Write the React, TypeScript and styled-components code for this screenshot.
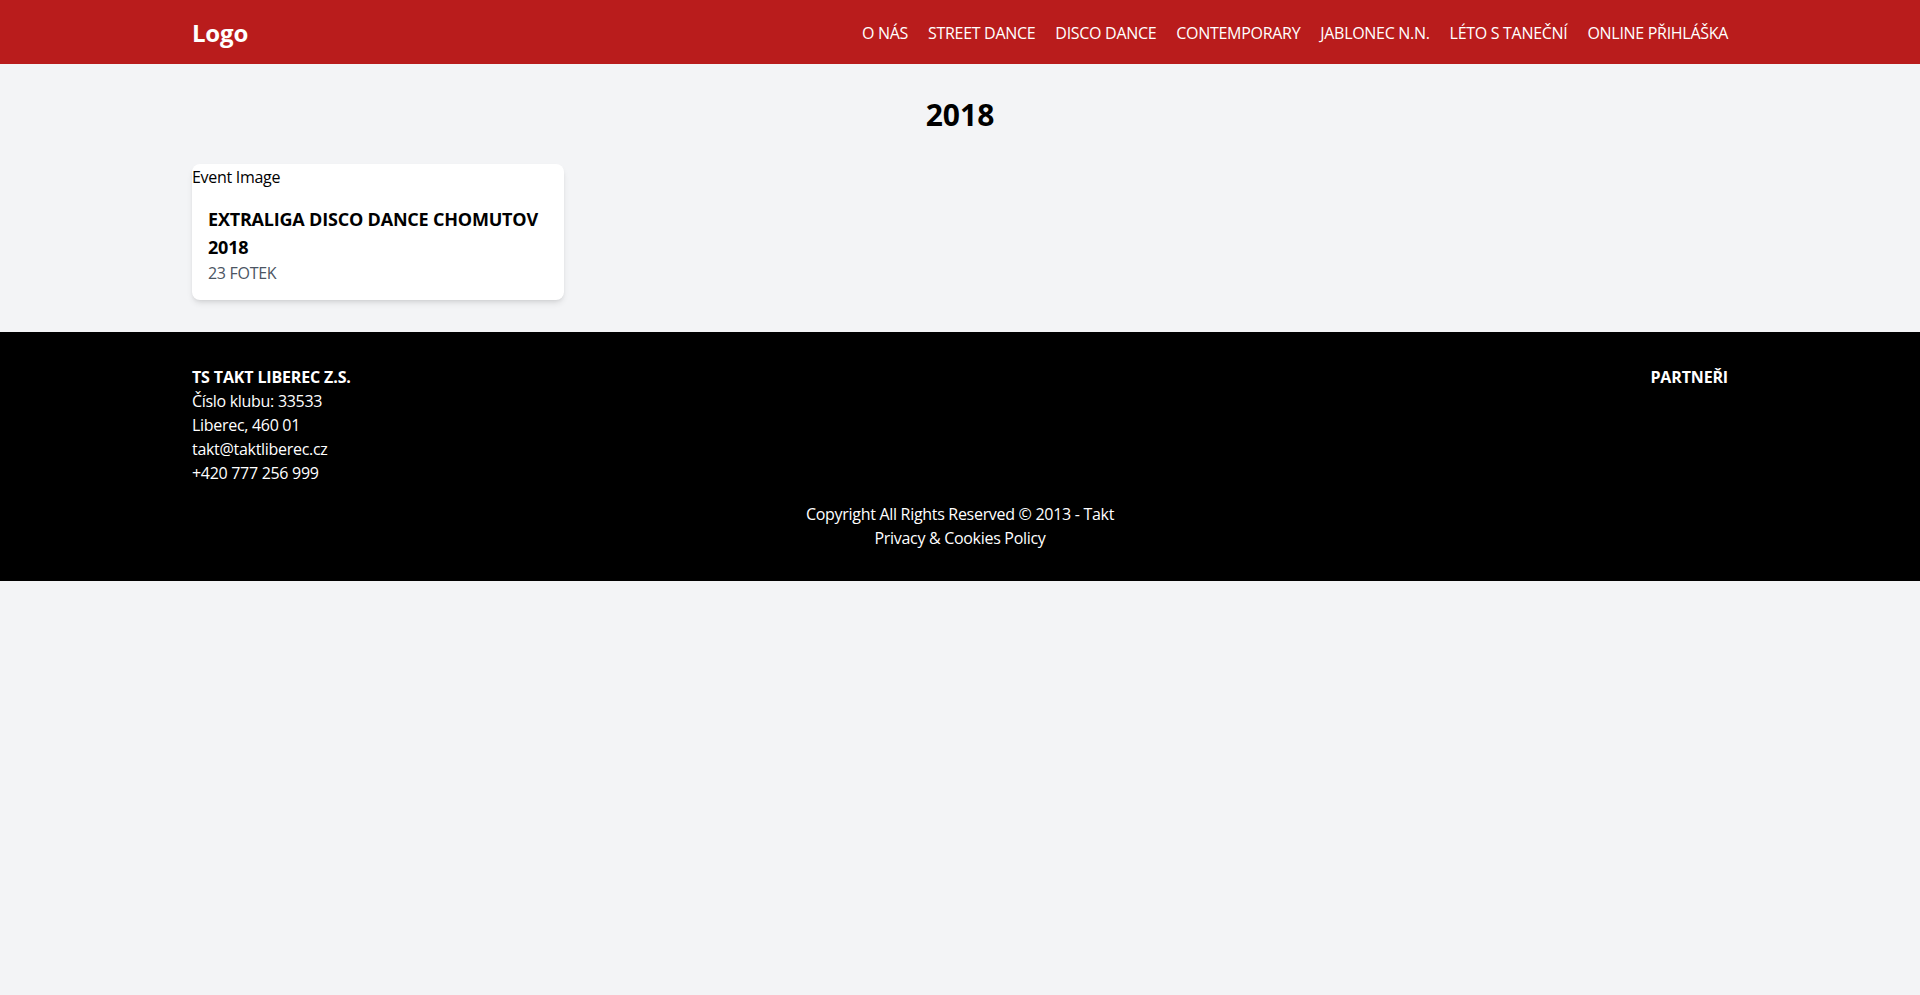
import React from "react";
import styled, { createGlobalStyle } from "styled-components";

const FONT = `"Open Sans", "Noto Sans", sans-serif`;

const Global = createGlobalStyle`
  * { box-sizing: border-box; }
  html, body { margin: 0; padding: 0; }
  body {
    background: #f3f4f6;
    font-family: ${FONT};
    font-size: 16px;
    line-height: 24px;
    letter-spacing: -0.3px;
    color: #000;
  }
  a { color: inherit; text-decoration: none; }
`;

const Header = styled.header`
  background: #b91c1c;
  color: #fff;
`;

const Container = styled.div`
  max-width: 1536px;
  margin: 0 auto;
`;

const HeaderInner = styled(Container)`
  height: 64px;
  display: flex;
  align-items: center;
  justify-content: space-between;
  padding-top: 2px;
`;

const Logo = styled.a`
  font-size: 24px;
  line-height: 32px;
  font-weight: 700;
  letter-spacing: -0.2px;
`;

const Nav = styled.nav`
  display: flex;
  gap: 20px;
`;

const NavLink = styled.a`
  font-size: 16px;
  line-height: 24px;
  text-transform: uppercase;
`;

const Main = styled(Container)`
  padding: 33px 0 32px;
`;

const Title = styled.h1`
  margin: 0 0 32px;
  text-align: center;
  font-size: 30px;
  line-height: 36px;
  font-weight: 700;
  letter-spacing: 0;
`;

const Grid = styled.div`
  display: grid;
  grid-template-columns: repeat(4, 1fr);
  gap: 16px;
  margin-top: -1px;
`;

const Card = styled.a`
  display: block;
  background: #fff;
  border-radius: 8px;
  overflow: hidden;
  box-shadow: 0 4px 6px -1px rgba(0, 0, 0, 0.1), 0 2px 4px -2px rgba(0, 0, 0, 0.1);
`;

const ImageAlt = styled.div`
  font-size: 16px;
  line-height: 24px;
  padding-top: 1px;
  height: 24px;
  color: #000;
`;

const CardBody = styled.div`
  padding: 17px 16px 15px;
`;

const CardTitle = styled.h2`
  margin: 0;
  font-size: 18px;
  line-height: 28px;
  font-weight: 700;
  letter-spacing: -0.2px;
  color: #000;
`;

const CardMeta = styled.p`
  margin: 0;
  color: #4b5563;
  font-size: 16px;
  line-height: 24px;
`;

const Footer = styled.footer`
  background: #000;
  color: #fff;
  padding: 33px 0 31px;
`;

const FooterTop = styled(Container)`
  display: flex;
  justify-content: space-between;
  align-items: flex-start;
`;

const FooterCol = styled.div`
  display: flex;
  flex-direction: column;
`;

const Strong = styled.span`
  font-weight: 700;
  letter-spacing: -0.15px;
`;

const FooterBottom = styled(Container)`
  margin-top: 17px;
  text-align: center;
  display: flex;
  flex-direction: column;
  align-items: center;
`;

const navItems = [
  "O nás",
  "Street dance",
  "Disco dance",
  "Contemporary",
  "Jablonec n.N.",
  "Léto s taneční",
  "Online přihláška",
];

export default function App() {
  return (
    <>
      <Global />
      <Header>
        <HeaderInner>
          <Logo href="#">Logo</Logo>
          <Nav>
            {navItems.map((n) => (
              <NavLink key={n} href="#">
                {n}
              </NavLink>
            ))}
          </Nav>
        </HeaderInner>
      </Header>
      <Main>
        <Title>2018</Title>
        <Grid>
          <Card href="#">
            <ImageAlt>Event Image</ImageAlt>
            <CardBody>
              <CardTitle>EXTRALIGA DISCO DANCE CHOMUTOV 2018</CardTitle>
              <CardMeta>23 FOTEK</CardMeta>
            </CardBody>
          </Card>
        </Grid>
      </Main>
      <Footer>
        <FooterTop>
          <FooterCol>
            <Strong>TS TAKT LIBEREC Z.S.</Strong>
            <span>Číslo klubu: 33533</span>
            <span>Liberec, 460 01</span>
            <span>takt@taktliberec.cz</span>
            <span>+420 777 256 999</span>
          </FooterCol>
          <FooterCol>
            <Strong>PARTNEŘI</Strong>
          </FooterCol>
        </FooterTop>
        <FooterBottom>
          <span>Copyright All Rights Reserved © 2013 - Takt</span>
          <a href="#">Privacy &amp; Cookies Policy</a>
        </FooterBottom>
      </Footer>
    </>
  );
}
